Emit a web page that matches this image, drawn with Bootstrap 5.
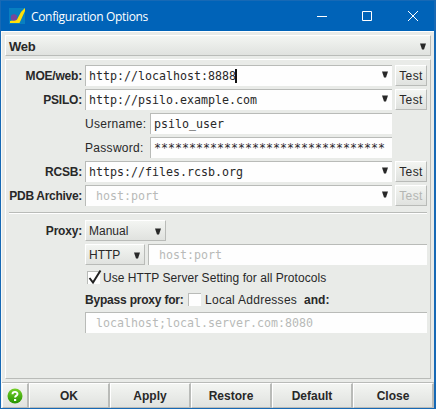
<!DOCTYPE html>
<html lang="en">
<head>
<meta charset="utf-8">
<meta name="viewport" content="width=device-width, initial-scale=1">
<title>Configuration Options</title>
<link href="https://cdn.jsdelivr.net/npm/bootstrap@5.3.0/dist/css/bootstrap.min.css" rel="stylesheet">
<style>
body{width:436px;height:409px;overflow:hidden;font:12px/22px "Liberation Sans",Arial,sans-serif;color:#282828;background:#e9ebe8}
.win{width:436px;height:409px;border:solid #1769b5;border-width:1px 2px 1px 1px}
.titlebar{height:30px;background:#0063b8;color:#fff;padding-left:8px;font:12px/30px "Open Sans","Noto Sans",sans-serif}
.caption{margin-left:6px;padding-top:1px;letter-spacing:-.33px}
.client{height:377px;background:#e9ebe8;border-top:1px solid #fff;border-left:1px solid #f8f9f7}
.raised{border:1px solid;border-color:#fff #b9bbb8 #b9bbb8 #fff;background:linear-gradient(#f3f5f2,#e0e2df)}
.section-head{height:21px;margin:3px 3px 0 3px;padding:1px 4px 0 3px;font-size:13px;letter-spacing:-.2px;line-height:19px}
.panel{height:320px;margin:3px 3px 0 3px;border:1px solid;border-color:#fff #b9bbb8 #b9bbb8 #fff;padding:5px 3px 0}
.line{height:21px;margin-bottom:3px}
.short{height:19px}
.lab{flex:0 0 76px;min-width:0;padding-right:3px;display:flex;justify-content:flex-end;font-weight:700;white-space:nowrap;letter-spacing:-.2px}
.tight{letter-spacing:-.3px}
.sub{flex:0 0 65px;white-space:nowrap;letter-spacing:.3px}
.entry{height:21px;background:#fefefe;border:solid #b9bbb8;border-width:1px 0 0 1px;padding:0 4px 0 3px;font:11.63px/20px "DejaVu Sans Mono",monospace;white-space:pre;min-width:0}
.main-entry{flex:0 0 307px}
.main-entry .arrow{margin-bottom:4px}
.pass{width:242px}
.ghost{color:#b8bab8;padding-left:10px}
.caret{width:2px;height:14px;background:#111;margin-left:-1px}
.arrow{width:6px;height:7px;flex:none}
.test{width:32px;height:21px;margin-left:3px;text-align:center;line-height:21px;white-space:nowrap;letter-spacing:.4px}
.off{color:#b4b6b3}
.pick{height:21px;padding:2px 4px 0 3px;line-height:19px}
.manual{width:81px}
.proto{width:60px;margin-right:3px}
.rule{height:2px;background:#b9bbb8;border-bottom:1px solid #fff;margin:6px 0}
.tick{width:13px;height:13px;background:#fefefe;border:solid #b9bbb8;border-width:1px 0 0 1px;flex:none}
.tick svg{display:block;overflow:visible}
.first{margin-left:2px}
.use{margin-left:3px;letter-spacing:.05px}
.bypass{width:103px;white-space:nowrap;letter-spacing:-.2px}
.local{margin:0 7px 0 4px;letter-spacing:.27px}
.indent{margin-left:76px}
.footer-bar{height:26px;margin-top:3px;border-top:1px solid #b9bbb8}
.cmd{height:25px;flex:1 1 0;text-align:center;font-weight:700;line-height:25px;border-right-width:2px}
.help{flex:0 0 27px}
</style>
<script src="https://cdn.jsdelivr.net/npm/bootstrap@5.3.0/dist/js/bootstrap.bundle.min.js"></script>
</head>
<body>
<svg class="d-none"><symbol id="down" viewBox="0 0 6 7"><path d="M0 .5H6L4 6.500H2Z" fill="#282828"/></symbol></svg>
<div class="win">
<header class="titlebar d-flex align-items-center">
<svg width="16" height="16" viewBox="0 0 16 16"><path fill="#087fc0" d="M0 0h16v16H0z"/><path fill="#ffdf08" d="M16 0v3L10.500 15H1v-2l7-1.500 4-7.500z"/><circle cx="5" cy="9.500" r="3.200" fill="#76479b"/></svg>
<span class="caption">Configuration Options</span>
<svg class="ms-auto" width="117" height="12" viewBox="0 0 117 12" fill="none" stroke="#fff"><path d="M0 6.500h10M45.500 1.500h9v9h-9zM91 1l10 10M101 1l-10 10"/></svg>
</header>
<main class="client">
<div class="section-head raised d-flex align-items-center justify-content-between fw-bold"><span>Web</span><svg class="arrow"><use href="#down"/></svg></div>
<section class="panel">
<div class="line d-flex"><div class="lab">MOE/web:</div><div class="entry main-entry d-flex align-items-center">http://localhost:8888<span class="caret"></span><svg class="arrow ms-auto"><use href="#down"/></svg></div><div class="test raised">Test</div></div>
<div class="line d-flex"><div class="lab">PSILO:</div><div class="entry main-entry d-flex align-items-center">http://psilo.example.com<svg class="arrow ms-auto"><use href="#down"/></svg></div><div class="test raised">Test</div></div>
<div class="line d-flex indent"><div class="sub">Username:</div><div class="entry pass">psilo_user</div></div>
<div class="line d-flex indent"><div class="sub">Password:</div><div class="entry pass">*********************************</div></div>
<div class="line d-flex"><div class="lab">RCSB:</div><div class="entry main-entry d-flex align-items-center">https://files.rcsb.org<svg class="arrow ms-auto"><use href="#down"/></svg></div><div class="test raised">Test</div></div>
<div class="line d-flex"><div class="lab tight">PDB Archive:</div><div class="entry main-entry ghost d-flex align-items-center">host:port<svg class="arrow ms-auto"><use href="#down"/></svg></div><div class="test raised off">Test</div></div>
<div class="rule"></div>
<div class="line d-flex"><div class="lab">Proxy:</div><div class="pick manual raised d-flex align-items-center justify-content-between">Manual<svg class="arrow"><use href="#down"/></svg></div></div>
<div class="line d-flex indent"><div class="pick proto raised d-flex align-items-center justify-content-between">HTTP<svg class="arrow"><use href="#down"/></svg></div><div class="entry ghost flex-grow-1">host:port</div></div>
<div class="line short d-flex align-items-center indent"><span class="tick first"><svg width="13" height="13" viewBox="0 0 13 13"><path d="M1.500 6L5 10.500 12.500-1.500" fill="none" stroke="#222" stroke-width="2"/></svg></span><span class="use">Use HTTP Server Setting for all Protocols</span></div>
<div class="line short d-flex align-items-center indent"><b class="bypass">Bypass proxy for:</b><span class="tick"></span><span class="local">Local Addresses</span><b>and:</b></div>
<div class="line d-flex indent"><div class="entry ghost flex-grow-1">localhost;local.server.com:8080</div></div>
</section>
<footer class="footer-bar d-flex">
<div class="cmd help raised d-flex align-items-center justify-content-center"><svg width="16" height="16" viewBox="0 0 16 16"><defs><linearGradient id="g" x2="0" y2="1"><stop stop-color="#75cf28"/><stop offset="1" stop-color="#259500"/></linearGradient></defs><circle cx="8" cy="8" r="7.500" fill="url(#g)"/><path d="M5.500 6.200C5.500 3.200 10.500 3.200 10.500 6c0 1.700-2.400 1.600-2.400 3.500" fill="none" stroke="#fff" stroke-width="1.900"/><path d="M7 11h2.200v2H7z" fill="#fff"/></svg></div>
<div class="cmd raised">OK</div><div class="cmd raised">Apply</div><div class="cmd raised">Restore</div><div class="cmd raised">Default</div><div class="cmd raised">Close</div>
</footer>
</main>
</div>
</body>
</html>
